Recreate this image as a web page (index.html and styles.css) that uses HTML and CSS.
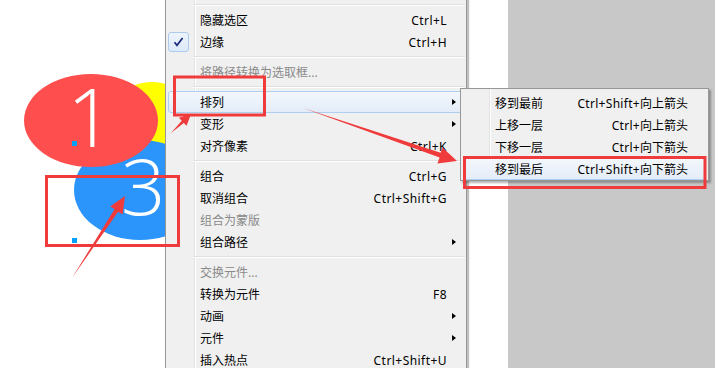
FILE: index.html
```html
<!DOCTYPE html>
<html lang="zh-CN">
<head>
<meta charset="utf-8">
<link rel="stylesheet" href="styles.css">
</head>
<body>
<div class="page">
  <div class="canvas">
    <div class="shape yellow"></div>
    <div class="shape blue"></div>
    <div class="shape red"></div>
    <span class="digit d1">1</span>
    <span class="digit d3">3</span>
    <span class="handle h1"></span>
    <span class="handle h2"></span>
  </div>
  <div class="menu">
    <div class="sep"></div>
    <div class="row"><span class="gut"></span><span class="lbl">隐藏选区</span><span class="key">Ctrl+L</span></div>
    <div class="row"><span class="gut"><span class="check"><svg width="11" height="10" viewBox="0 0 11 10"><path d="M1.5 5.2 L4 8.3 L9.6 1" fill="none" stroke="#1b2a78" stroke-width="1.7"/></svg></span></span><span class="lbl">边缘</span><span class="key">Ctrl+H</span></div>
    <div class="sep"></div>
    <div class="row dis"><span class="gut"></span><span class="lbl">将路径转换为选取框...</span></div>
    <div class="sep"></div>
    <div class="row hot"><span class="gut"></span><span class="lbl">排列</span><span class="arr"></span></div>
    <div class="row"><span class="gut"></span><span class="lbl">变形</span><span class="arr"></span></div>
    <div class="row"><span class="gut"></span><span class="lbl">对齐像素</span><span class="key">Ctrl+K</span></div>
    <div class="sep"></div>
    <div class="row"><span class="gut"></span><span class="lbl">组合</span><span class="key">Ctrl+G</span></div>
    <div class="row"><span class="gut"></span><span class="lbl">取消组合</span><span class="key">Ctrl+Shift+G</span></div>
    <div class="row dis"><span class="gut"></span><span class="lbl">组合为蒙版</span></div>
    <div class="row"><span class="gut"></span><span class="lbl">组合路径</span><span class="arr"></span></div>
    <div class="sep"></div>
    <div class="row dis"><span class="gut"></span><span class="lbl">交换元件...</span></div>
    <div class="row"><span class="gut"></span><span class="lbl">转换为元件</span><span class="key">F8</span></div>
    <div class="row"><span class="gut"></span><span class="lbl">动画</span><span class="arr"></span></div>
    <div class="row"><span class="gut"></span><span class="lbl">元件</span><span class="arr"></span></div>
    <div class="row"><span class="gut"></span><span class="lbl">插入热点</span><span class="key">Ctrl+Shift+U</span></div>
  </div>
  <div class="strip"></div>
  <div class="gray"></div>

  <div class="submenu">
    <div class="row"><span class="gut"></span><span class="lbl">移到最前</span><span class="key"><span class="lat">Ctrl+Shift+</span>向上箭头</span></div>
    <div class="row"><span class="gut"></span><span class="lbl">上移一层</span><span class="key"><span class="lat">Ctrl+</span>向上箭头</span></div>
    <div class="row"><span class="gut"></span><span class="lbl">下移一层</span><span class="key"><span class="lat">Ctrl+</span>向下箭头</span></div>
    <div class="row hot"><span class="gut"></span><span class="lbl">移到最后</span><span class="key"><span class="lat">Ctrl+Shift+</span>向下箭头</span></div>
  </div>

  <svg class="notes" width="715" height="368" viewBox="0 0 715 368">
    <g fill="none" stroke="#ef3b3b" stroke-width="3">
      <rect x="174.5" y="77" width="90" height="38"/>
      <rect x="464.5" y="157.5" width="240.5" height="30"/>
      <rect x="46.5" y="176.5" width="132" height="69"/>
    </g>
    <g fill="#ef3b3b">
      <polygon points="303,108 439.6,157.4 437.4,163.5 457,161 442.4,147.4 440.6,152.8"/>
      <polygon points="171,133 183.8,123 186.6,125.8 191,114 178.9,117.8 181.7,120.8"/>
      <polygon points="72,278 118.1,211.8 122.6,214.6 125,196 110.2,206.5 114.5,209.2"/>
    </g>
  </svg>
</div>
</body>
</html>
```
FILE: styles.css
```css
* { box-sizing: border-box; }
html, body { margin: 0; padding: 0; }
body {
  background: #fff;
  font-family: "Noto Sans", "Noto Sans CJK SC", sans-serif;
  font-size: 12px;
  color: #000;
}
.page {
  position: relative;
  width: 715px;
  height: 368px;
  overflow: hidden;
  display: flex;
}
.canvas {
  position: relative;
  width: 165px;
  flex: none;
  background: #fff;
}
.shape { position: absolute; border-radius: 50%; }
.yellow { left: 102px; top: 82px; width: 100px; height: 100px; background: #ffff00; }
.blue { left: 74px; top: 140px; width: 132px; height: 100px; background: #2b95fc; }
.red { left: 24px; top: 74px; width: 134px; height: 93px; background: #fe4e4e; }
.digit {
  position: absolute;
  font-family: "Open Sans", sans-serif;
  font-weight: 300;
  color: #fff;
  font-size: 82px;
  line-height: 1;
}
.d1 { left: 67px; top: 74px; }
.d3 { left: 121px; top: 146px; font-size: 78px; }
.handle { position: absolute; width: 5px; height: 5px; background: #00a2ff; }
.h1 { left: 72px; top: 141px; }
.h2 { left: 72px; top: 238px; }

.menu {
  width: 302px;
  flex: none;
  border-left: 1px solid #979797;
  border-right: 1px solid #979797;
  box-shadow: 2px 0 1px rgba(0,0,0,0.25);
  padding-top: 1px;
  background: linear-gradient(to right, #f0f0f0 28px, #e2e3e3 28px, #e2e3e3 29px, #fff 29px, #fff 30px, #f0f0f0 30px);
  position: relative;
  z-index: 1;
}
.strip { width: 41px; flex: none; background: #fff; }
.gray { flex: 1; background: #c8c8c8; }

.sep {
  height: 8px;
  margin-left: 27px;
  margin-right: 1px;
  padding-top: 3px;
}
.sep::before {
  content: "";
  display: block;
  border-top: 1px solid #e0e0e0;
  border-bottom: 1px solid #fff;
}
.row {
  height: 22px;
  display: flex;
  align-items: center;
  padding-right: 19px;
  white-space: nowrap;
}
.gut {
  width: 34px;
  flex: none;
  height: 22px;
  display: flex;
  align-items: center;
  padding-left: 2px;
}
.lbl { flex: 1; }
.key { margin-left: auto; letter-spacing: 0.45px; }
.submenu .key { letter-spacing: 0; }
.submenu .key .lat { letter-spacing: 0.3px; }
.dis { color: #8a8a8a; }
.arr {
  margin-left: auto;
  margin-right: -9px;
  width: 0;
  height: 0;
  border-top: 3.5px solid transparent;
  border-bottom: 3.5px solid transparent;
  border-left: 4px solid #000;
}
.check {
  width: 21px;
  height: 20px;
  border: 1px solid #aecbed;
  border-radius: 3px;
  background: linear-gradient(#eef4fc, #dde9f8);
  display: flex;
  align-items: center;
  justify-content: center;
}
.hot {
  margin: 0 2px;
  border: 1px solid #aed0f0;
  border-radius: 3px;
  background: linear-gradient(#f3f7fc, #e3ecf8);
  padding-right: 16px;
}
.hot .gut { width: 31px; padding-left: 0; }

.submenu {
  position: absolute;
  left: 460px;
  top: 88px;
  width: 249px;
  height: 93px;
  border: 1px solid #979797;
  box-shadow: 2px 2px 2px rgba(0,0,0,0.3);
  padding-top: 3px;
  background: linear-gradient(to right, #f0f0f0 28px, #e2e3e3 28px, #e2e3e3 29px, #fff 29px, #fff 30px, #f0f0f0 30px);
  z-index: 2;
}
.submenu .row { padding-right: 20px; }
.submenu .hot { padding-right: 17px; }

.notes {
  position: absolute;
  left: 0;
  top: 0;
  pointer-events: none;
  z-index: 3;
}
```
